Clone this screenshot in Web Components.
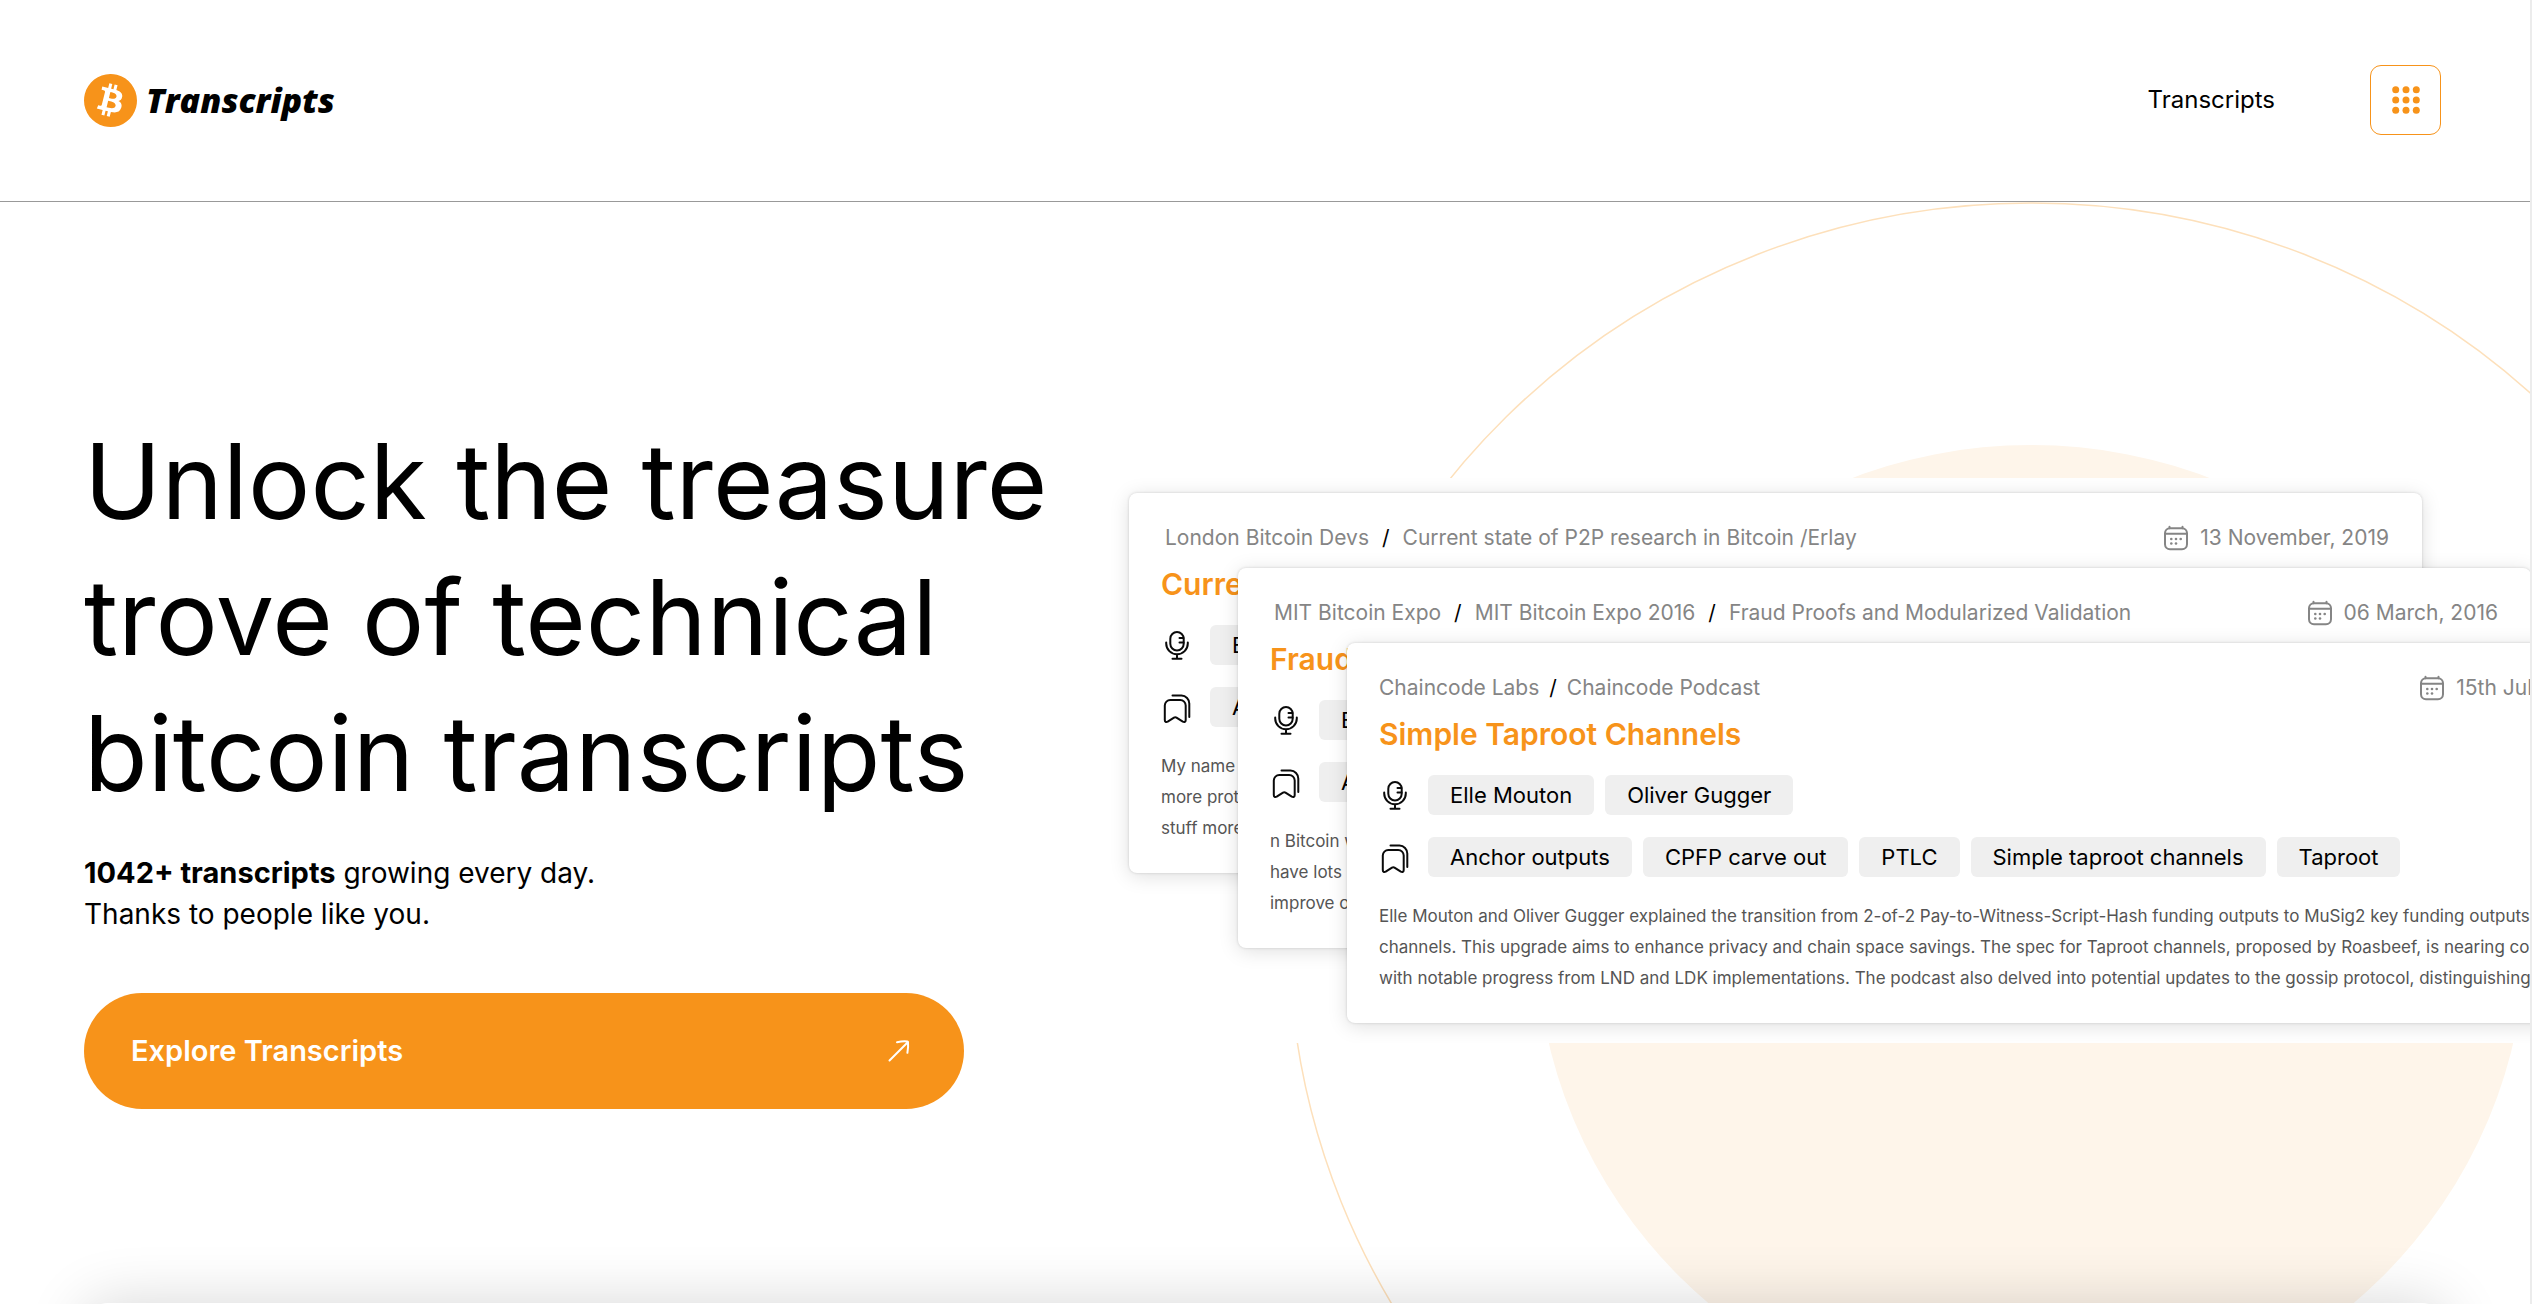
<!DOCTYPE html>
<html lang="en">
<head>
<meta charset="utf-8">
<title>Bitcoin Transcripts</title>
<style>
  body { margin: 0; background: #fff; color: #000; font-family: Inter, "Noto Sans", sans-serif; }
</style>
</head>
<body>
<transcripts-page></transcripts-page>
<script>
const define = (name, html) => {
  const template = document.createElement('template');
  template.innerHTML = html;
  customElements.define(name, class extends HTMLElement {
    constructor() {
      super();
      this.attachShadow({ mode: 'open' }).append(template.content.cloneNode(true));
    }
  });
};

define('brand-logo', `
  <style>
    :host { display: block; }
    a { display: flex; align-items: center; gap: 9px; color: #000; text-decoration: none;
        font: italic 800 34px/44px "Open Sans", "Noto Sans", sans-serif; }
    svg { width: 53px; height: 53px; }
  </style>
  <a href="#">
    <svg viewBox="0 0 24 24" aria-hidden="true"><path fill="#f7931a" d="M23.638 14.904c-1.602 6.43-8.113 10.34-14.542 8.736C2.67 22.05-1.244 15.525.362 9.105 1.962 2.67 8.475-1.243 14.9.358c6.43 1.605 10.342 8.115 8.738 14.548v-.002zm-6.35-4.613c.24-1.59-.974-2.45-2.64-3.03l.54-2.153-1.315-.33-.525 2.107c-.345-.087-.705-.167-1.064-.25l.526-2.127-1.32-.33-.54 2.165c-.285-.067-.565-.132-.84-.2l-1.815-.45-.35 1.407s.975.225.955.236c.535.136.63.486.615.766l-1.477 5.92c-.075.166-.24.406-.614.314.015.02-.96-.24-.96-.24l-.66 1.51 1.71.426.93.242-.54 2.19 1.32.327.54-2.17c.36.1.705.19 1.05.273l-.51 2.154 1.32.33.545-2.19c2.24.427 3.93.257 4.64-1.774.57-1.637-.03-2.58-1.217-3.196.854-.193 1.5-.76 1.68-1.93h.01zm-3.01 4.22c-.404 1.64-3.157.75-4.05.53l.72-2.9c.896.23 3.757.67 3.33 2.37zm.41-4.24c-.37 1.49-2.662.735-3.405.55l.654-2.64c.744.18 3.137.524 2.75 2.084v.006z"/></svg>
    <span>Transcripts</span>
  </a>`);

define('apps-button', `
  <style>
    :host { display: block; }
    button { display: grid; place-items: center; width: 71px; height: 70px; padding: 0; background: #fff;
             border: 1px solid #f7931a; border-radius: 11px; }
    svg { width: 30px; height: 30px; fill: #f7931a; }
  </style>
  <button type="button" aria-label="Open apps menu">
    <svg viewBox="0 0 30 30">
      <circle cx="4.700" cy="4.700" r="3.500"/><circle cx="15" cy="4.700" r="3.500"/><circle cx="25.300" cy="4.700" r="3.500"/>
      <circle cx="4.700" cy="15" r="3.500"/><circle cx="15" cy="15" r="3.500"/><circle cx="25.300" cy="15" r="3.500"/>
      <circle cx="4.700" cy="25.300" r="3.500"/><circle cx="15" cy="25.300" r="3.500"/><circle cx="25.300" cy="25.300" r="3.500"/>
    </svg>
  </button>`);

define('site-header', `
  <style>
    :host { display: block; border-bottom: 1px solid #999; }
    header { display: flex; align-items: center; justify-content: space-between; padding: 65px 89px 66px 84px; }
    nav { display: flex; align-items: center; gap: 95px; }
    nav a { color: #000; text-decoration: none; font-size: 24px; line-height: 32px; }
  </style>
  <header>
    <brand-logo></brand-logo>
    <nav><a href="#">Transcripts</a><apps-button></apps-button></nav>
  </header>`);

define('cta-link', `
  <style>
    :host { display: block; }
    a { display: flex; align-items: center; justify-content: space-between; height: 116px; padding: 0 53px 0 47px;
        box-sizing: border-box; border-radius: 58px; background: #f7931a; color: #fff; text-decoration: none;
        font-size: 29px; font-weight: 600; }
    svg { width: 24px; height: 24px; fill: none; stroke: #fff; stroke-width: 2; stroke-linecap: round; stroke-linejoin: round; }
  </style>
  <a href="#"><slot></slot>
    <svg viewBox="0 0 24 24" aria-hidden="true"><path d="M2.5 21.5 21 3M10 3.2c4-.8 7.500-1 10.300-.7.400.100.700.400.700.8.300 3 .100 6.500-.6 10.500"/></svg>
  </a>`);

define('tag-pill', `
  <style>
    :host { display: block; padding: 0 22px; border-radius: 6px; background: #efefef; color: #000;
            font-size: 22px; line-height: 40px; white-space: nowrap; }
  </style><slot></slot>`);

define('tag-row', `
  <style>
    :host { display: flex; align-items: center; gap: 11px; }
  </style>
  <slot name="icon"></slot><slot></slot>`);

define('mic-icon', `
  <style>:host { display: block; width: 30px; height: 30px; margin: 0 7px 0 1px; }
    svg { display: block; overflow: visible; fill: none; stroke: #0a0a0a; stroke-width: 2; stroke-linecap: round; }</style>
  <svg width="30" height="30" viewBox="0 0 30 30"><rect x="8.300" y="2" width="13.400" height="18.500" rx="6.700"/>
    <path d="M4.200 12.500v1a10.800 10.800 0 0 0 21.600 0v-1M15 24.500v4M10.500 28.700h9M17.500 8h4M17.500 12.500h4"/></svg>`);

define('bookmark-icon', `
  <style>:host { display: block; width: 30px; height: 30px; margin: 0 7px 0 1px; }
    svg { display: block; overflow: visible; fill: none; stroke: #0a0a0a; stroke-width: 2; stroke-linecap: round; stroke-linejoin: round; }</style>
  <svg width="30" height="30" viewBox="0 0 30 30">
    <path d="M2.800 13.500a5.500 5.500 0 0 1 5.500-5.500h9.900a5.500 5.500 0 0 1 5.500 5.500v14.500c0 1.800-1.300 2.500-2.900 1.700l-6.300-4c-.8-.5-1.700-.5-2.500 0l-6.300 4c-1.600.8-2.900.1-2.900-1.700z"/>
    <path d="M10.500 3.600h9a8 8 0 0 1 7.800 8v13.400"/></svg>`);

define('calendar-icon', `
  <style>:host { display: block; width: 24px; height: 24px; }
    svg { display: block; overflow: visible; fill: none; stroke: #858585; stroke-width: 2; stroke-linecap: round; }
    .dots { fill: #858585; stroke: none; }</style>
  <svg width="24" height="24" viewBox="0 0 24 24"><rect x="1" y="2.200" width="22" height="21" rx="5"/>
    <path d="M1 7.800h22M5.500 .8v1.400M18.500 .8v1.400"/>
    <g class="dots"><circle cx="7.300" cy="13" r="1.300"/><circle cx="12" cy="13" r="1.300"/><circle cx="16.700" cy="13" r="1.300"/><circle cx="7.300" cy="17.500" r="1.300"/><circle cx="12" cy="17.500" r="1.300"/></g></svg>`);

define('transcript-card', `
  <style>
    :host { display: flex; flex-direction: column; box-sizing: border-box; padding: 31px 33px 29px 32px;
            border-radius: 8px; background: #fff; box-shadow: 0 0 3px rgba(0,0,0,.16), 0 3px 20px rgba(0,0,0,.13); }
    .top { display: flex; justify-content: space-between; color: #858585; font-size: 21px; line-height: 28px; white-space: nowrap; }
    .crumbs, .date { display: flex; align-items: center; }
    .crumbs { gap: var(--crumb-gap, 13px); padding-left: var(--crumb-inset, 4px); }
    .date { gap: 12px; }
    h2 { margin: 14px 0 23px; color: #f7931a; font-size: 30px; line-height: 36px; font-weight: 600; white-space: nowrap; }
    .tags { display: flex; flex-direction: column; gap: 22px; }
    p { margin: 24px 0 0; color: #555; font-size: 17px; line-height: 31px; white-space: nowrap; }
  </style>
  <div class="top">
    <div class="crumbs"><slot name="crumb"></slot></div>
    <div class="date"><calendar-icon></calendar-icon><slot name="date"></slot></div>
  </div>
  <h2><slot name="title"></slot></h2>
  <div class="tags"><slot name="tags"></slot></div>
  <p><slot></slot></p>`);

define('card-stack', `
  <style>
    :host { display: grid; grid-template-columns: minmax(0, 1fr); align-items: start; overflow: hidden;
            padding: 15px 0 20px 29px; background: #fff; }
    transcript-card { grid-area: 1 / 1; width: calc(100% - 108px); margin: calc(var(--level) * 75px) 0 0 calc(var(--level) * 109px); }
    .first { --level: 0; }
    .second { --level: 1; }
    .third { --level: 2; --crumb-gap: 10px; --crumb-inset: 0px; }
    i { color: #000; font-style: normal; }
  </style>
  <transcript-card class="first">
    <span slot="crumb">London Bitcoin Devs</span><i slot="crumb">/</i><span slot="crumb">Current state of P2P research in Bitcoin /Erlay</span>
    <span slot="date">13 November, 2019</span>
    <span slot="title">Curren</span>
    <tag-row slot="tags"><mic-icon slot="icon"></mic-icon><tag-pill>Elle</tag-pill></tag-row>
    <tag-row slot="tags"><bookmark-icon slot="icon"></bookmark-icon><tag-pill>Anchor</tag-pill></tag-row>
    My name<br>more proto<br>stuff more
  </transcript-card>
  <transcript-card class="second">
    <span slot="crumb">MIT Bitcoin Expo</span><i slot="crumb">/</i><span slot="crumb">MIT Bitcoin Expo 2016</span><i slot="crumb">/</i><span slot="crumb">Fraud Proofs and Modularized Validation</span>
    <span slot="date">06 March, 2016</span>
    <span slot="title">Fraud</span>
    <tag-row slot="tags"><mic-icon slot="icon"></mic-icon><tag-pill>Elle</tag-pill></tag-row>
    <tag-row slot="tags"><bookmark-icon slot="icon"></bookmark-icon><tag-pill>Anchor</tag-pill></tag-row>
    n Bitcoin w<br>have lots o<br>improve o
  </transcript-card>
  <transcript-card class="third">
    <span slot="crumb">Chaincode Labs</span><i slot="crumb">/</i><span slot="crumb">Chaincode Podcast</span>
    <span slot="date">15th July, 2023</span>
    <span slot="title">Simple Taproot Channels</span>
    <tag-row slot="tags"><mic-icon slot="icon"></mic-icon><tag-pill>Elle Mouton</tag-pill><tag-pill>Oliver Gugger</tag-pill></tag-row>
    <tag-row slot="tags"><bookmark-icon slot="icon"></bookmark-icon><tag-pill>Anchor outputs</tag-pill><tag-pill>CPFP carve out</tag-pill><tag-pill>PTLC</tag-pill><tag-pill>Simple taproot channels</tag-pill><tag-pill>Taproot</tag-pill></tag-row>
    Elle Mouton and Oliver Gugger explained the transition from 2-of-2 Pay-to-Witness-Script-Hash funding outputs to MuSig2 key funding outputs in<br>channels. This upgrade aims to enhance privacy and chain space savings. The spec for Taproot channels, proposed by Roasbeef, is nearing completion<br>with notable progress from LND and LDK implementations. The podcast also delved into potential updates to the gossip protocol, distinguishing between
  </transcript-card>`);

define('hero-section', `
  <style>
    :host { position: relative; display: grid; grid-template-columns: 1016fr 1430fr; align-items: center; box-sizing: border-box;
            min-height: calc(100vh - 203px); padding: 16px 0 0 84px; overflow: hidden; }
    .rings { position: absolute; right: -244px; top: 0; width: 1486px; height: 1462px; }
    .copy, card-stack { position: relative; }
    h1 { margin: 0 0 32px; font-size: 104px; line-height: 136px; font-weight: 400; white-space: nowrap; }
    p { margin: 0 0 58px; font-size: 28px; line-height: 41px; }
    b { font-size: 29px; line-height: 1; }
    cta-link { max-width: 880px; }
  </style>
  <svg class="rings" viewBox="0 0 1486 1462" aria-hidden="true">
    <ellipse cx="743" cy="731" rx="742" ry="730" fill="none" stroke="#fde0bb" stroke-width="1.500"/>
    <ellipse cx="743" cy="731" rx="495" ry="488" fill="#fef5ea"/>
  </svg>
  <div class="copy">
    <h1>Unlock the treasure<br>trove of technical<br>bitcoin transcripts</h1>
    <p><b>1042+ transcripts</b> growing every day.<br>Thanks to people like you.</p>
    <cta-link>Explore Transcripts</cta-link>
  </div>
  <card-stack></card-stack>`);

define('next-panel', `
  <style>
    :host { display: block; position: relative; height: 1px; padding: 0 84px; }
    div { height: 400px; border-radius: 24px; background: #fff; box-shadow: 0 0 60px rgba(0,0,0,.16); }
  </style><div></div>`);

define('transcripts-page', `
  <style>
    :host { display: block; box-sizing: border-box; height: 100vh; overflow: hidden; border-right: 2px solid #ececec; }
  </style>
  <site-header></site-header>
  <main><hero-section></hero-section></main>
  <next-panel></next-panel>`);
</script>
</body>
</html>
